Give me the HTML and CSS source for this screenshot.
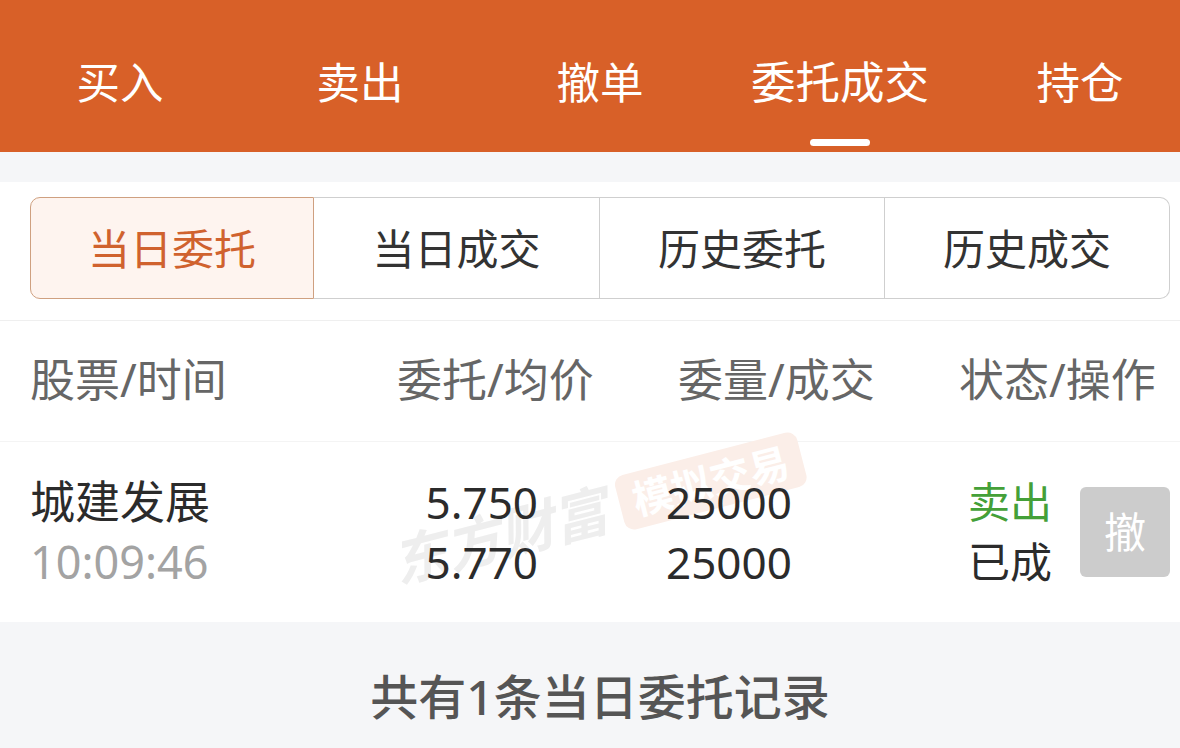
FILE: index.html
```html
<!DOCTYPE html>
<html>
  <head>
    <title>委托成交</title>
    <link rel="stylesheet" href="styles.css">
  </head>
  <body>
    <div class="nav">
      <div class="nav_item">买入</div>
      <div class="nav_item">卖出</div>
      <div class="nav_item">撤单</div>
      <div class="nav_item active">委托成交</div>
      <div class="nav_item">持仓</div>
    </div>
    <div class="tabs_wrap">
      <div class="tabs">
        <div class="tab active">当日委托</div>
        <div class="tab">当日成交</div>
        <div class="tab">历史委托</div>
        <div class="tab">历史成交</div>
      </div>
    </div>
    <div class="head">
      <div class="head_first">股票/时间</div>
      <div class="head_col">委托/均价</div>
      <div class="head_col">委量/成交</div>
      <div class="head_last">状态/操作</div>
    </div>
    <div class="row">
      <div class="watermark">
        <span class="wm_brand">东方财富</span>
        <span class="wm_tag">模拟交易</span>
      </div>
      <div class="cell_name">
        <div>城建发展</div>
        <div class="time">10:09:46</div>
      </div>
      <div class="cell_price">
        <div>5.750</div>
        <div>5.770</div>
      </div>
      <div class="cell_qty">
        <div>25000</div>
        <div>25000</div>
      </div>
      <div class="cell_state">
        <div class="sell">卖出</div>
        <div>已成</div>
      </div>
      <div class="cancel">撤</div>
    </div>
    <div class="summary">共有1条当日委托记录</div>
  </body>
</html>
```

FILE: styles.css
```css
html, body {
  margin: 0;
  height: 748px;
  overflow: hidden;
}

body {
  background-color: #F5F6F8;
  color: #2B2B2B;
  font-family: "Noto Sans", "Noto Sans CJK SC", sans-serif;
  font-size: 44px;
}

.nav {
  display: grid;
  grid-template-columns: repeat(5, 240px);
  grid-template-rows: 152px;
  background-color: #D86028;
  color: #FFFFFF;
  font-size: 43.5px;
}

.nav_item {
  position: relative;
  padding-top: 4px;
  text-align: center;
  line-height: 156px;
  height: 148px;
}

.nav_item.active {
  font-size: 44.5px;
}

.nav_item.active::after {
  content: "";
  position: absolute;
  left: 90px;
  bottom: 6px;
  width: 60px;
  height: 7px;
  border-radius: 4px;
  background-color: #FFFFFF;
}

.tabs_wrap {
  margin-top: 30px;
  padding: 15px 10px 21px 30px;
  background-color: #FFFFFF;
  border-bottom: 1px solid #EFEFEF;
}

.tabs {
  display: grid;
  grid-template-columns: 284px 286px 285px 285px;
  height: 102px;
}

.tab {
  display: flex;
  align-items: center;
  justify-content: center;
  box-sizing: border-box;
  padding-bottom: 4px;
  font-size: 42px;
  color: #333333;
  border: 1px solid #CFCFCF;
  border-left: 0;
}

.tab:last-child {
  border-radius: 0 10px 10px 0;
}

.tab.active {
  color: #D0622E;
  background-color: #FEF4EF;
  border: 1px solid #CFA080;
  border-radius: 10px 0 0 10px;
}

.head {
  display: flex;
  height: 120px;
  align-items: center;
  padding-left: 30px;
  padding-bottom: 0;
  background-color: #FFFFFF;
  border-bottom: 1px solid #F4F4F4;
  color: #666666;
  font-size: 45px;
  white-space: nowrap;
}

.head > div {
  margin-bottom: 7px;
}

.head_first {
  width: 367px;
}

.head_col {
  width: 281px;
}

.head_last {
  width: 220px;
}

.row {
  position: relative;
  display: flex;
  height: 180px;
  align-items: center;
  padding-left: 30px;
  background-color: #FFFFFF;
  line-height: 60px;
  font-size: 44px;
  white-space: nowrap;
}

.row > div:not(.watermark) {
  position: relative;
}

.watermark {
  position: absolute;
  left: 402px;
  top: 85px;
  display: flex;
  align-items: center;
  gap: 14px;
  height: 70px;
  transform: rotate(-14.5deg);
  transform-origin: left bottom;
  font-weight: 700;
}

.wm_brand {
  font-size: 55px;
  font-style: italic;
  color: #EEEEEE;
}

.wm_tag {
  width: 188px;
  height: 56px;
  border-radius: 10px;
  background-color: #FBEEE8;
  color: #FFFFFF;
  font-size: 40px;
  line-height: 56px;
  text-align: center;
}

.cell_name {
  width: 200px;
  font-size: 45px;
}

.time {
  color: #A3A3A3;
}

.cell_price {
  width: 308px;
  text-align: right;
}

.cell_qty {
  width: 430px;
  padding-left: 128px;
  box-sizing: border-box;
}

.cell_state {
  width: 112px;
  font-size: 42px;
}

.sell {
  color: #44A038;
}

.cancel {
  width: 90px;
  height: 90px;
  border-radius: 6px;
  background-color: #CCCCCC;
  color: #FFFFFF;
  font-size: 42px;
  text-align: center;
  line-height: 90px;
}

.summary {
  padding-top: 44px;
  padding-left: 20px;
  text-align: center;
  color: #555555;
  font-weight: 500;
  font-size: 48px;
  line-height: 62px;
}
```
